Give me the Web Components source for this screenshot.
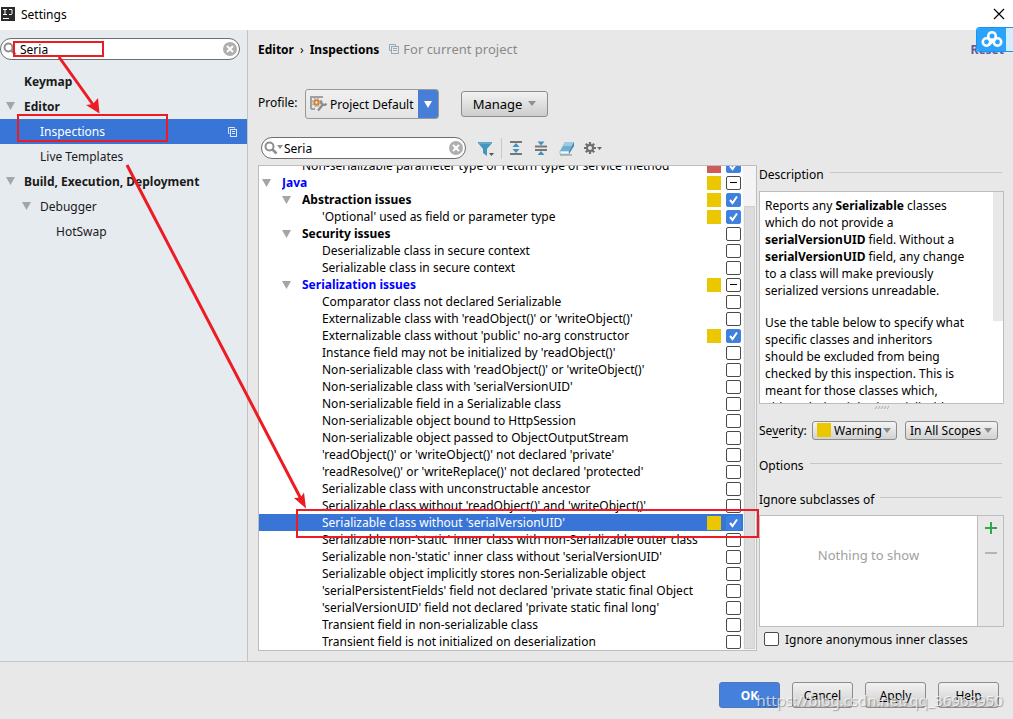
<!DOCTYPE html>
<html lang="en">
<head>
<meta charset="utf-8">
<title>Settings</title>
<style>
  body { margin: 0; font: 12px/17px "Noto Sans", "Open Sans", sans-serif; color: #000; }
</style>
</head>
<body>
<settings-window></settings-window>
<script>
  const BASE = `<style>
    *, *::before, *::after { box-sizing: border-box; }
    :host([hidden]) { display: none; }
    input, button, select { font: inherit; color: inherit; margin: 0; }
    svg { display: block; flex: none; }
  </style>`;

  function define(name, render) {
    customElements.define(name, class extends HTMLElement {
      connectedCallback() {
        if (this.shadowRoot) return;
        const t = document.createElement('template');
        t.innerHTML = BASE + render(this);
        this.attachShadow({ mode: 'open' }).append(t.content.cloneNode(true));
      }
    });
  }

  /* Title bar with the application icon */
  define('title-bar', () => `
    <style>
      :host { display: flex; align-items: center; height: 30px; background: #fff; padding: 0 8px 2px 1px; box-sizing: border-box; }
      h1 { flex: 1; margin: 0 0 0 6px; font: inherit; font-size: 12px; }
      button { border: 0; background: none; padding: 0; }
    </style>
    <svg width="14" height="14"><rect width="14" height="14" fill="#2b2b2b"/>
      <path d="M2 2.500h4M4 2.500v5M2 7.500h4M8 2.500h3v4q0 1-1 1H8" stroke="#fff" fill="none"/><path d="M2 11.500h6" stroke="#fff"/></svg>
    <h1><slot></slot></h1>
    <button aria-label="Close"><svg width="12" height="12"><path d="M1 1l10 10M11 1L1 11" stroke="#000" stroke-width="1.2"/></svg></button>`);

  /* Rounded search box with magnifier and clear button */
  define('search-field', el => `
    <style>
      :host { display: flex; flex: none; }
      div { flex: 1; min-width: 0; display: flex; align-items: center; height: 22px; border: 1px solid #6e6e6e; border-radius: 11px; background: #fff; padding: 0 2px; }
      input { flex: 1; min-width: 0; width: 0; border: 0; outline: 0; padding: 0; background: none; height: 20px; }
      button { border: 0; background: none; padding: 0; }
    </style>
    <div>
      <svg width="${el.hasAttribute('menu') ? 20 : 17}" height="16" fill="none"><circle cx="5.500" cy="6.500" r="4" stroke="#8e8e8e" stroke-width="2"/><path d="M8.500 9.500l4 4" stroke="#8e8e8e" stroke-width="2.500"/>
      ${el.hasAttribute('menu') ? '<path d="M13 5h6l-3 4z" fill="#8e8e8e"/>' : ''}</svg>
      <input type="text" value="${el.getAttribute('value')}" aria-label="${el.getAttribute('label')}">
      <button aria-label="Clear"><svg width="14" height="14"><circle cx="7" cy="7" r="7" fill="#afafaf"/><path d="M4 4l6 6M10 4l-6 6" stroke="#fff" stroke-width="2"/></svg></button>
    </div>`);

  /* One entry of the category tree on the left */
  define('nav-item', () => `
    <style>
      :host { display: flex; align-items: center; height: 25px; padding: 0 9px 0 5px; color: #1a1a1a; }
      :host([bold]) { font-weight: 700; }
      :host([depth="1"]) { padding-left: 21px; }
      :host([depth="2"]) { padding-left: 37px; }
      :host([selected]) { background: #3875d7; color: #fff; }
      .tri { width: 19px; visibility: hidden; }
      :host([open]) .tri { visibility: visible; }
      a { flex: 1; color: inherit; text-decoration: none; white-space: nowrap; }
      .copy { display: none; }
      :host([selected]) .copy { display: block; }
    </style>
    <span class="tri"><svg width="11" height="9"><path d="M1 0h9l-4.500 8z" fill="#a5a5a5"/></svg></span>
    <a href="#"><slot></slot></a>
    <svg class="copy" width="11" height="11" fill="none" stroke="#dbe6f7"><path d="M2.500 7.500h-1v-6h6v1"/><rect x="3.500" y="3.500" width="6" height="7"/><path d="M5 5.500h3M5 7.500h3"/></svg>`);

  define('nav-pane', () => `
    <style>
      :host { display: block; width: 248px; box-sizing: border-box; flex: none; background: #e6ebef; border-right: 1px solid #c3c3c3; padding-top: 8px; }
      search-field { width: 240px; margin-bottom: 9px; }
    </style>
    <search-field value="Seria" label="Search settings"></search-field>
    <nav><slot></slot></nav>`);

  /* Path of the open page */
  define('crumb-bar', () => `
    <style>
      :host { display: flex; align-items: center; height: 20px; }
      .sep { margin: 0 6px; }
      svg { margin: 0 4px 0 10px; }
      .note { flex: 1; color: #8a8a8a; font-size: 13px; }
      a { color: #5b5ba0; font-weight: 700; text-decoration: none; }
    </style>
    <b>Editor</b><span class="sep">›</span><b>Inspections</b>
    <svg width="10" height="10" fill="none" stroke="#9aa7ad"><path d="M2.500 6.500h-2v-6h6v2" stroke="#7fb0c8"/><rect x="2.500" y="2.500" width="7" height="7"/><path d="M4 4.500h4M4 6.500h4"/></svg>
    <span class="note">For current project</span>
    <a href="#">Reset</a>`);

  define('profile-bar', () => `
    <style>
      :host { display: flex; align-items: center; height: 30px; }
      label { width: 47px; margin-bottom: 3px; }
      .combo { display: grid; grid-template-columns: 112px 22px; width: 134px; height: 30px; border: 1px solid #9a9a9a; border-radius: 3px; overflow: hidden; background: linear-gradient(#f0f0f0, #e4e4e4); }
      .combo > * { grid-row: 1; }
      .combo svg { align-self: center; grid-column: 1; margin-left: 4px; }
      .arrow { grid-column: 2; background: #467ed8; display: grid; place-items: center start; }
      .arrow svg { margin-left: 6px; }
      select { grid-column: 1 / 3; appearance: none; border: 0; outline: 0; background: none; padding: 0 0 0 24px; z-index: 1; height: 28px; }
      button { width: 87px; height: 26px; margin-left: 22px; border: 1px solid #8c8c8c; border-radius: 3px; background: linear-gradient(#f2f2f2, #cdcdcd); display: flex; align-items: center; justify-content: center; gap: 6px; padding: 0; font-size: 13px; }
    </style>
    <label for="p">Profile:</label>
    <div class="combo">
      <svg width="17" height="16" fill="none"><path d="M1 13V1h12M1 13h4" stroke="#a0a0a0" stroke-width="2"/><circle cx="6.500" cy="6.500" r="4" stroke="#b4b4b4" stroke-width="1.500" stroke-dasharray="2 1.140"/><circle cx="6.500" cy="6.500" r="2.200" stroke="#d08536" stroke-width="2"/><path d="M8 14.500l5-6M11.500 4.500q-1 3 1.500 4t3.500-1" stroke="#8a8a8a" stroke-width="2.200"/></svg>
      <span class="arrow"><svg width="8" height="7"><path d="M0 0h8L4 7z" fill="#fff"/></svg></span>
      <select id="p"><option>Project Default</option></select>
    </div>
    <button>Manage <svg width="8" height="6"><path d="M0 0h8L4 5z" fill="#8f8f8f"/></svg></button>`);

  define('inspection-toolbar', () => `
    <style>
      :host { display: flex; align-items: center; height: 24px; padding-left: 3px; }
      search-field { width: 205px; margin-right: 12px; }
      button { display: grid; place-items: center start; border: 0; background: none; padding: 0; width: 17px; height: 17px; margin-right: 8px; }
      hr { width: 1px; height: 21px; border: 0; background: #c8c8c8; margin: 0 7px 0 -2px; }
      button:last-child { width: 20px; margin: 0; }
    </style>
    <search-field menu value="Seria" label="Search inspections"></search-field>
    <button aria-label="Filter"><svg width="17" height="17"><path d="M0 2h14v1L9 9v7l-4-3V9L0 3z" fill="#4596bf"/><path d="M1 3h12" stroke="#7fb9d5"/><path d="M11 13h5l-2.500 3z" fill="#555"/></svg></button>
    <hr>
    <button aria-label="Expand all"><svg width="14" height="16"><path d="M1 2h12M1 14h12" stroke="#777" stroke-width="2"/><path d="M7 3l3.500 4h-7zM7 13l3.500-4h-7z" fill="#4390bd"/></svg></button>
    <button aria-label="Collapse all"><svg width="14" height="16"><path d="M1 6.500h12M1 10h12" stroke="#777" stroke-width="2"/><path d="M7 5.500l3.500-4h-7zM7 11l3.500 4h-7z" fill="#4390bd"/></svg></button>
    <button aria-label="Reset to empty"><svg width="16" height="16"><path d="M6 2h9l-5 9H1z" fill="#6eaed0"/><path d="M6 2h9l-2 4H4z" fill="#9ccbe2"/><path d="M1 11h9v3H1z" fill="#f3fafd" stroke="#83b5ce" stroke-width=".7"/><path d="M10 11l5-9v4l-5 8z" fill="#3d88b3"/><path d="M1 15h12" stroke="#888"/></svg></button>
    <button aria-label="Options"><svg width="18" height="16"><g stroke="#6e6e6e" stroke-width="2.200"><path d="M6 2v12M0 8h12M1.800 3.800l8.400 8.400M10.200 3.800l-8.400 8.400"/></g><circle cx="6" cy="8" r="4" fill="#6e6e6e"/><circle cx="6" cy="8" r="2" fill="#e8e8e8"/><path d="M13 7h5l-2.500 3z" fill="#666"/></svg></button>`);

  /* Tick box with on, off and mixed states */
  define('tick-box', el => `
    <style>
      :host { display: block; width: 15px; height: 14px; flex: none; }
      input { appearance: none; display: grid; place-items: center; width: 15px; height: 14px; border: 1px solid #4a4a4a; border-radius: 2px; background: #fff; }
      input:checked { border-color: #3a86e8; background: #4080dc url("data:image/svg+xml,%3Csvg xmlns='http://www.w3.org/2000/svg' width='13' height='12'%3E%3Cpath d='M3 6l2.500 3L10 2.500' fill='none' stroke='white' stroke-width='2'/%3E%3C/svg%3E") no-repeat; }
      :host([mixed]) input::before { content: ""; width: 7px; height: 1px; background: #000; }
    </style>
    <input type="checkbox" ${el.hasAttribute('checked') ? 'checked' : ''} aria-label="${el.getAttribute('label')}">`);

  define('inspection-row', el => `
    <style>
      :host { display: flex; flex: none; align-items: center; height: 17px; padding: 0 2px 0 3px; }
      :host([group]) { font-weight: 700; }
      :host([modified]) { color: #00f; }
      :host([selected]) { background: #3875d7; color: #fff; }
      :host([depth="1"]) { padding-left: 23px; }
      :host([depth="2"]) { padding-left: 43px; }
      .tri { width: 20px; flex: none; visibility: hidden; }
      :host([group]) .tri { visibility: visible; }
      .name { flex: 1; min-width: 0; overflow: hidden; white-space: nowrap; margin-right: 4px; }
      i { width: 14px; height: 14px; margin-right: 5px; flex: none; }
      i.warning { background: #ebc700; }
      i.error { background: #cf5b56; }
    </style>
    <span class="tri"><svg width="11" height="9"><path d="M0 1h9l-4.500 8z" fill="#a5a5a5"/></svg></span>
    <span class="name"><slot></slot></span>
    <i class="${el.getAttribute('severity') || ''}"></i>
    <tick-box label="${el.textContent}" ${el.hasAttribute('on') ? 'checked' : ''} ${el.hasAttribute('mixed') ? 'mixed' : ''}></tick-box>`);

  /* The list takes the height of its column and stays scrolled to its end */
  define('inspection-tree', () => `
    <style>
      :host { display: flex; flex: 1 1 0px; min-height: 0; box-sizing: border-box; border: 1px solid #bdbdbd; background: #fff; overflow: hidden; }
      .rows { flex: 1; min-width: 0; display: flex; flex-direction: column; justify-content: flex-end; }
      .track { width: 13px; flex: none; background: #f4f4f4; padding: 40px 1px 1px; display: flex; }
      .thumb { flex: 1; background: #dcdcdc; border: 1px solid #d0d0d0; }
    </style>
    <div class="rows"><slot></slot></div>
    <div class="track"><div class="thumb"></div></div>`);

  define('section-title', () => `
    <style>
      :host { display: flex; align-items: center; gap: 6px; height: 18px; padding-right: 2px; }
      h2 { margin: 0; font: inherit; }
      h2 + span { flex: 1; height: 1px; background: #c6c6c6; margin-bottom: 3px; }
    </style>
    <h2><slot></slot></h2><span></span>`);

  define('description-box', () => `
    <style>
      :host { display: flex; height: 213px; border: 1px solid #bdbdbd; background: #fff; overflow: hidden; }
      .text { flex: 1; padding: 5px 22px 0 5px; }
      .thumb { width: 10px; height: 129px; background: #e8e8e8; }
    </style>
    <div class="text"><slot></slot></div><div class="thumb"></div>`);

  /* Drop-down with an optional severity swatch */
  define('choice-box', el => `
    <style>
      :host { display: grid; align-items: center; height: 19px; border: 1px solid #8c8c8c; border-radius: 3px; background: linear-gradient(#f4f4f4, #d2d2d2); }
      .sw, svg, select { grid-area: 1 / 1; }
      .sw { width: 14px; height: 14px; background: #ebc700; margin-left: 4px; }
      svg { justify-self: end; margin-right: 5px; }
      select { appearance: none; border: 0; outline: 0; background: none; height: 17px; width: 100%; padding: 0 0 0 ${el.hasAttribute('swatch') ? 21 : 4}px; z-index: 1; }
    </style>
    ${el.hasAttribute('swatch') ? '<span class="sw"></span>' : ''}
    <svg width="8" height="5"><path d="M0 0h8L4 5z" fill="#8c8c8c"/></svg>
    <select aria-label="${el.getAttribute('label')}"><option>${el.getAttribute('value')}</option></select>`);

  define('severity-bar', () => `
    <style>
      :host { display: flex; align-items: center; height: 20px; }
      .l { width: 53px; } u { text-underline-offset: 2px; }
      .s { width: 85px; margin-right: 8px; } .c { width: 93px; }
    </style>
    <span class="l">Se<u>v</u>erity:</span>
    <choice-box class="s" swatch value="Warning" label="Severity"></choice-box>
    <choice-box class="c" value="In All Scopes" label="Scope"></choice-box>`);

  /* Editable list with add and remove buttons */
  define('class-list', () => `
    <style>
      :host { display: flex; height: 112px; border: 1px solid #bdbdbd; }
      p { flex: 1; margin: 0; background: #fff; text-align: center; color: #a0a0a0; padding-top: 31px; font-size: 13px; }
      div { width: 26px; border-left: 1px solid #bdbdbd; display: flex; flex-direction: column; align-items: center; padding-top: 6px; gap: 12px; }
      button { border: 0; background: none; padding: 0; }
    </style>
    <p>Nothing to show</p>
    <div><button aria-label="Add"><svg width="12" height="12"><path d="M6 0v12M0 6h12" stroke="#2fa64f" stroke-width="2"/></svg></button>
    <button aria-label="Remove"><svg width="12" height="12"><path d="M0 7h12" stroke="#b4b4b4" stroke-width="2"/></svg></button></div>`);

  define('details-pane', () => `
    <style>
      :host { display: flex; flex-direction: column; width: 245px; flex: none; }
      .grip { align-self: center; margin: 1px 0 10px; }
      .o { margin: 16px 0; } .d { margin-bottom: 8px; } .i { margin-bottom: 7px; }
      label { display: flex; align-items: center; gap: 6px; height: 24px; padding-left: 5px; }
      label input { appearance: none; width: 15px; height: 14px; border: 1px solid #4a4a4a; border-radius: 2px; background: #fff; }
    </style>
    <section-title class="d">Description</section-title>
    <description-box><slot></slot></description-box>
    <svg class="grip" width="16" height="5"><path d="M1 4l2-3M4 4l2-3M7 4l2-3M10 4l2-3M13 4l2-3" stroke="#aaa"/></svg>
    <severity-bar></severity-bar>
    <section-title class="o">Options</section-title>
    <section-title class="i">Ignore subclasses of</section-title>
    <class-list></class-list>
    <label><input type="checkbox">Ignore anonymous inner classes</label>`);

  define('push-button', () => `
    <style>
      :host { display: block; width: 61px; }
      button { width: 100%; height: 26px; padding: 0; border: 1px solid #8c8c8c; border-radius: 3px; background: linear-gradient(#f2f2f2, #cdcdcd); }
      :host([primary]) button { background: #4580dc; border-color: #5278b4; color: #fff; font-weight: 700; }
    </style>
    <button><slot></slot></button>`);

  define('dialog-footer', () => `
    <style>
      :host { display: flex; justify-content: flex-end; gap: 12px; height: 58px; box-sizing: border-box; padding: 20px 14px 0 0; border-top: 1px solid #c3c3c3; flex: none; }
    </style>
    <slot></slot>`);

  /* Red call-outs, the sync badge and the blog mark lie over the dialog */
  define('overlay-marks', () => `
    <style>
      :host { position: absolute; inset: 0; pointer-events: none; overflow: hidden; }
      .marks { position: absolute; left: 0; top: 0; }
      .badge { position: absolute; right: 0; top: 27px; width: 37px; height: 25px; border: 1px solid #1c93f2; border-right: 0; border-radius: 4px 0 0 4px; background: #d3efff; overflow: hidden; }
      .badge svg { background: #2aa3fd; }
      .mark { position: absolute; right: 10px; bottom: 8px; font-size: 15px; line-height: 22px; color: #ffffffb0; text-shadow: 1px 1px 1px #00000050; }
    </style>
    <svg class="marks" width="770" height="560" fill="none" stroke="#ed1c24" stroke-width="2">
      <rect x="14" y="42" width="89" height="14"/><rect x="18" y="115" width="149" height="26"/><rect x="297" y="510" width="461" height="27"/>
      <path d="M59 57l35 49M127 165l174 334" stroke-width="3"/>
      <path d="M99.500 113.500L86 105l7-1 5-6zM306 508.500L294 498l6.500-.500 3.500-5z" fill="#ed1c24" stroke="none"/>
    </svg>
    <div class="badge"><svg width="29" height="23" fill="none" stroke="#fff" stroke-width="2.600"><circle cx="15" cy="8" r="3.800"/><circle cx="9.500" cy="14" r="3.700"/><circle cx="20.500" cy="14" r="3.700"/><path d="M12 16.500l6-5"/></svg></div>
    <span class="mark">https://blog.csdn.net/qq_36963950</span>`);

  define('settings-window', () => `
    <style>
      :host { display: flex; flex-direction: column; min-height: 100vh; position: relative; background: #e8e8e8; }
      .main { flex: 1; display: flex; }
      .page { flex: 1; min-width: 0; display: flex; flex-direction: column; padding: 9px 9px 10px 10px; }
      profile-bar { margin: 30px 0 17px; }
      .cols { flex: 1; display: flex; gap: 2px; }
      .left { flex: 1; min-width: 0; display: flex; flex-direction: column; }
      inspection-toolbar { margin-bottom: 5px; }
      details-pane { padding-top: 29px; }
      p { margin: 0 0 15px; }
    </style>
    <title-bar>Settings</title-bar>
    <div class="main">
      <nav-pane>
        <nav-item bold>Keymap</nav-item>
        <nav-item bold open>Editor</nav-item>
        <nav-item depth="1" selected>Inspections</nav-item>
        <nav-item depth="1">Live Templates</nav-item>
        <nav-item bold open>Build, Execution, Deployment</nav-item>
        <nav-item depth="1" open>Debugger</nav-item>
        <nav-item depth="2">HotSwap</nav-item>
      </nav-pane>
      <div class="page">
        <crumb-bar></crumb-bar>
        <profile-bar></profile-bar>
        <div class="cols">
          <div class="left">
            <inspection-toolbar></inspection-toolbar>
            <inspection-tree>
              <inspection-row depth="1" severity="error" on>Non-serializable parameter type or return type of service method</inspection-row>
              <inspection-row group modified severity="warning" mixed>Java</inspection-row>
              <inspection-row group depth="1" severity="warning" on>Abstraction issues</inspection-row>
              <inspection-row depth="2" severity="warning" on>'Optional' used as field or parameter type</inspection-row>
              <inspection-row group depth="1">Security issues</inspection-row>
              <inspection-row depth="2">Deserializable class in secure context</inspection-row>
              <inspection-row depth="2">Serializable class in secure context</inspection-row>
              <inspection-row group modified depth="1" severity="warning" mixed>Serialization issues</inspection-row>
              <inspection-row depth="2">Comparator class not declared Serializable</inspection-row>
              <inspection-row depth="2">Externalizable class with 'readObject()' or 'writeObject()'</inspection-row>
              <inspection-row depth="2" severity="warning" on>Externalizable class without 'public' no-arg constructor</inspection-row>
              <inspection-row depth="2">Instance field may not be initialized by 'readObject()'</inspection-row>
              <inspection-row depth="2">Non-serializable class with 'readObject()' or 'writeObject()'</inspection-row>
              <inspection-row depth="2">Non-serializable class with 'serialVersionUID'</inspection-row>
              <inspection-row depth="2">Non-serializable field in a Serializable class</inspection-row>
              <inspection-row depth="2">Non-serializable object bound to HttpSession</inspection-row>
              <inspection-row depth="2">Non-serializable object passed to ObjectOutputStream</inspection-row>
              <inspection-row depth="2">'readObject()' or 'writeObject()' not declared 'private'</inspection-row>
              <inspection-row depth="2">'readResolve()' or 'writeReplace()' not declared 'protected'</inspection-row>
              <inspection-row depth="2">Serializable class with unconstructable ancestor</inspection-row>
              <inspection-row depth="2">Serializable class without 'readObject()' and 'writeObject()'</inspection-row>
              <inspection-row depth="2" selected severity="warning" on>Serializable class without 'serialVersionUID'</inspection-row>
              <inspection-row depth="2">Serializable non-'static' inner class with non-Serializable outer class</inspection-row>
              <inspection-row depth="2">Serializable non-'static' inner class without 'serialVersionUID'</inspection-row>
              <inspection-row depth="2">Serializable object implicitly stores non-Serializable object</inspection-row>
              <inspection-row depth="2">'serialPersistentFields' field not declared 'private static final Object</inspection-row>
              <inspection-row depth="2">'serialVersionUID' field not declared 'private static final long'</inspection-row>
              <inspection-row depth="2">Transient field in non-serializable class</inspection-row>
              <inspection-row depth="2">Transient field is not initialized on deserialization</inspection-row>
            </inspection-tree>
          </div>
          <details-pane>
            <p>Reports any <b>Serializable</b> classes which do not provide a <b>serialVersionUID</b> field. Without a <b>serialVersionUID</b> field, any change to a class will make previously serialized versions unreadable.</p>
            <p>Use the table below to specify what specific classes and inheritors should be excluded from being checked by this inspection. This is meant for those classes which, although they inherit Serializable</p>
          </details-pane>
        </div>
      </div>
    </div>
    <dialog-footer>
      <push-button primary>OK</push-button>
      <push-button>Cancel</push-button>
      <push-button><u>A</u>pply</push-button>
      <push-button>Help</push-button>
    </dialog-footer>
    <overlay-marks></overlay-marks>`);
</script>
</body>
</html>
